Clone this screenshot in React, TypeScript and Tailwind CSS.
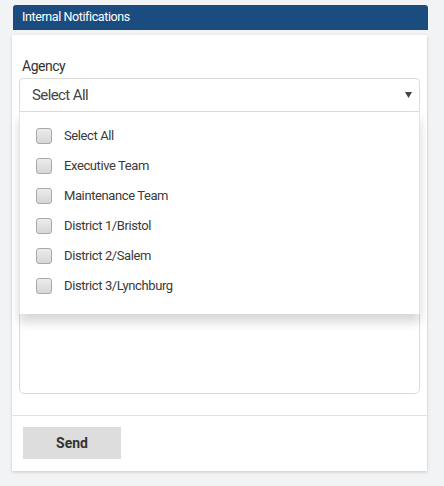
import { useState } from "react";

const agencies = [
  "Select All",
  "Executive Team",
  "Maintenance Team",
  "District 1/Bristol",
  "District 2/Salem",
  "District 3/Lynchburg",
];

export default function App() {
  const [checked, setChecked] = useState<string[]>([]);

  const toggle = (name: string) => {
    setChecked((prev) =>
      prev.includes(name) ? prev.filter((n) => n !== name) : [...prev, name]
    );
  };

  return (
    <div className="min-h-screen bg-[#f2f3f5] px-[12px] pt-[5px] font-['Roboto',Arial,sans-serif]">
      <div className="ml-[1px] flex h-[25px] w-[415px] items-center rounded-t-[3px] bg-[#1b4c80] px-[9px] text-[12.5px] tracking-[-0.4px] text-white">
        Internal Notifications
      </div>

      <div className="mt-[5px] w-[415px] bg-white shadow-[0_1px_3px_rgba(0,0,0,0.18)]">
        <div className="px-[7px] pb-[21px] pt-[21px]">
          <label className="block pl-[3px] text-[14px] leading-[20px] tracking-[-0.5px] text-[#333]">
            Agency
          </label>

          <div className="relative mt-[2px]">
            <div className="flex h-[34px] items-center justify-between rounded-t-[4px] border border-[#dcdcdc] pl-[12px] pr-[5px] text-[15px] tracking-[-0.6px] text-[#444]">
              <span>Select All</span>
              <svg width="7" height="6" viewBox="0 0 7 6" className="mr-[2px]">
                <path d="M0 0h7L3.5 6z" fill="#444" />
              </svg>
            </div>

            <ul className="absolute left-0 right-0 top-full z-10 h-[202px] border-x border-[#e4e4e4] bg-white pt-[9px] shadow-[0_8px_10px_rgba(0,0,0,0.16)]">
              {agencies.map((name) => (
                <li
                  key={name}
                  onClick={() => toggle(name)}
                  className="flex h-[30px] cursor-pointer items-center pl-[16px] text-[13px] tracking-[-0.4px] text-[#3a3a3a]"
                >
                  <span className="flex h-[16px] w-[16px] items-center justify-center rounded-[3px] border border-[#a9a9a9] bg-[linear-gradient(#ececec,#d6d6d6)] text-[11px] leading-none">
                    {checked.includes(name) ? "✓" : ""}
                  </span>
                  <span className="ml-[12px]">{name}</span>
                </li>
              ))}
            </ul>
          </div>

          <textarea
            aria-label="Message"
            className="mt-[38px] block h-[244px] w-full resize-none rounded-[5px] border border-[#dcdcdc] outline-none"
          />
        </div>

        <div className="border-t border-[#e2e2e2] px-[11px] pb-[12px] pt-[11px]">
          <button className="h-[32px] w-[98px] bg-[#dddddd] text-[14px] font-bold text-[#333]">
            Send
          </button>
        </div>
      </div>
    </div>
  );
}
